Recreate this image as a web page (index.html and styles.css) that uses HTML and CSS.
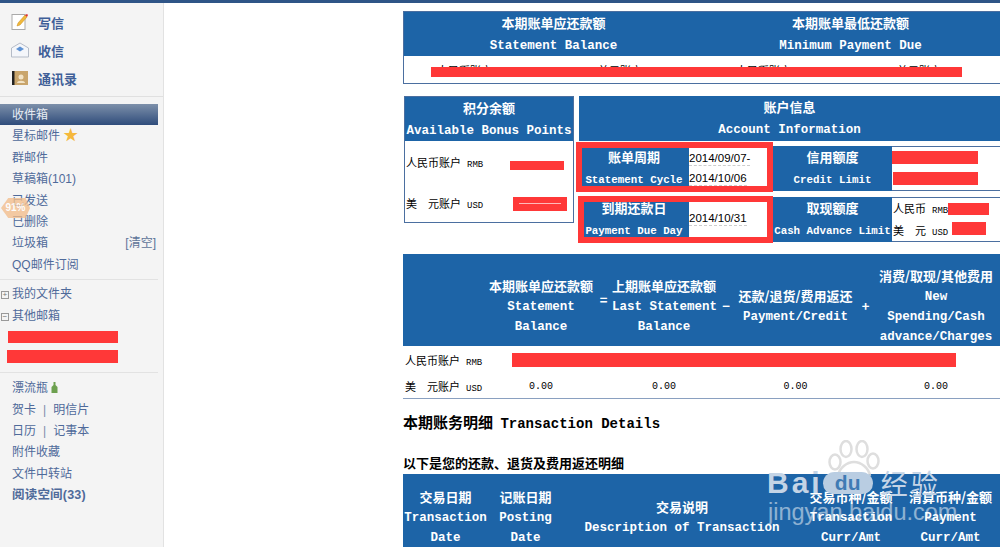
FILE: index.html
```html
<!DOCTYPE html>
<html lang="zh">
<head>
<meta charset="utf-8">
<title>邮箱</title>
<link rel="stylesheet" href="styles.css">
</head>
<body>
<div class="topbar"></div>
<div class="page">
  <aside class="side">
    <ul class="compose">
      <li><svg class="ic" viewBox="0 0 18 18"><rect x="1" y="1.500" width="13" height="15" fill="#fff" stroke="#aaa"/><path d="M6 13l1-3 7-8 2 2-7 8z" fill="#f0b93a" stroke="#c88a20" stroke-width=".5"/><path d="M14 2l2 2 1-2-1-1z" fill="#d33"/></svg>写信</li>
      <li><svg class="ic" viewBox="0 0 18 18"><path d="M.5 7L9 2l8.500 5v9H.5z" fill="#f4f6fa" stroke="#b5bcc8"/><path d="M5 8l4-2.500L13 8l-4 2.500z" fill="#5f93d4"/></svg>收信</li>
      <li><svg class="ic" viewBox="0 0 18 18"><rect x="1" y="2" width="16" height="14" fill="#c9a56c"/><rect x="1" y="2" width="2.500" height="14" fill="#222"/><circle cx="10" cy="8" r="2.500" fill="#f2e3c6"/><path d="M6 14c0-3 8-3 8 0z" fill="#f2e3c6"/></svg>通讯录</li>
    </ul>
    <ul class="menu first">
      <li class="active">收件箱</li>
      <li>星标邮件 <span class="star">★</span></li>
      <li>群邮件</li>
      <li>草稿箱(101)</li>
      <li>已发送</li>
      <li>已删除</li>
      <li class="spread">垃圾箱<span class="clear">[清空]</span></li>
      <li>QQ邮件订阅</li>
    </ul>
    <ul class="menu second">
      <li><span class="toggle">+</span>我的文件夹</li>
      <li><span class="toggle">−</span>其他邮箱</li>
      <li class="mask-row"><span class="mask-side"></span></li>
      <li class="mask-row"><span class="mask-side"></span></li>
    </ul>
    <ul class="menu third">
      <li>漂流瓶 <svg class="bottle" viewBox="0 0 7 11"><path d="M2.500 0h2v3l2 2v6H.5V5l2-2z" fill="#6da04f"/></svg></li>
      <li>贺卡<span class="sep">|</span>明信片</li>
      <li>日历<span class="sep">|</span>记事本</li>
      <li>附件收藏</li>
      <li>文件中转站</li>
      <li class="strong">阅读空间(33)</li>
    </ul>
    <div class="badge">91%</div>
  </aside>

  <main class="main">
    <table class="tbl summary">
      <tr class="head"><th>本期账单应还款额<span class="en">Statement Balance</span></th><th class="shift">本期账单最低还款额<span class="en">Minimum Payment Due</span></th></tr>
      <tr class="values"><td>人民币账户 <span class="usd">美元账户</span></td><td>人民币账户 <span class="usd">美元账户</span></td></tr>
    </table>
    <div class="mask m-summary"></div>

    <div class="info-row">
      <section class="points">
        <h3 class="panel-head">积分余额<span class="en">Available Bonus Points</span></h3>
        <div class="acct-list">
          <div class="acct">人民币账户 <span class="cur">RMB</span></div>
          <div class="acct">美　元账户 <span class="cur">USD</span></div>
        </div>
      </section>
      <section class="account">
        <h3 class="panel-head">账户信息<span class="en">Account Information</span></h3>
        <div class="account-grid">
          <div class="label">账单周期<span class="en sm">Statement Cycle</span></div>
          <div class="date"><span>2014/09/07-</span><span>2014/10/06</span></div>
          <div class="label">信用额度<span class="en sm">Credit Limit</span></div>
          <div class="limit"></div>
          <div class="label">到期还款日<span class="en sm">Payment Due Day</span></div>
          <div class="date one"><span>2014/10/31</span></div>
          <div class="label">取现额度<span class="en sm">Cash Advance Limit</span></div>
          <div class="limit cash"><div>人民币 <span class="cur">RMB</span></div><div>美　元 <span class="cur">USD</span></div></div>
        </div>
      </section>
      <div class="mask m-p1"></div><div class="mask m-p2"><i></i></div>
      <div class="mask m-c1"></div><div class="mask m-c2"></div>
      <div class="mask m-c3"></div><div class="mask m-c4"></div>
      <div class="frame f1"></div><div class="frame f2"></div>
    </div>

    <table class="tbl balance">
      <colgroup><col class="b0"><col class="b1"><col class="b2"><col class="b3"><col class="b4"><col class="b5"><col class="b6"><col class="b7"></colgroup>
      <tr class="head">
        <th></th>
        <th>本期账单应还款额<span class="en">Statement<br>Balance</span></th>
        <th class="op eq">=</th>
        <th>上期账单应还款额<span class="en">Last Statement<br>Balance</span></th>
        <th class="op">−</th>
        <th>还款/退货/费用返还<span class="en">Payment/Credit</span></th>
        <th class="op">+</th>
        <th class="last">消费/取现/其他费用<span class="en">New<br>Spending/Cash<br>advance/Charges</span></th>
      </tr>
      <tr class="amount rmb"><td class="name">人民币账户 <span class="cur">RMB</span></td><td></td><td></td><td></td><td></td><td></td><td></td><td></td></tr>
      <tr class="amount usd-row"><td class="name">美　元账户 <span class="cur">USD</span></td><td>0.00</td><td></td><td>0.00</td><td></td><td>0.00</td><td></td><td class="last">0.00</td></tr>
    </table>
    <div class="mask m-balance"></div>

    <h2 class="title">本期账务明细 <span class="en-title">Transaction Details</span></h2>
    <h4 class="subtitle">以下是您的还款、退货及费用返还明细</h4>

    <table class="tbl detail">
      <colgroup><col class="d0"><col class="d1"><col class="d2"><col class="d3"><col class="d4"></colgroup>
      <tr class="head">
        <th>交易日期<span class="en">Transaction<br>Date</span></th>
        <th>记账日期<span class="en">Posting<br>Date</span></th>
        <th>交易说明<span class="en">Description of Transaction</span></th>
        <th>交易币种/金额<span class="en">Transaction<br>Curr/Amt</span></th>
        <th class="shift">清算币种/金额<span class="en">Payment<br>Curr/Amt</span></th>
      </tr>
    </table>
  </main>
</div>

<div class="watermark">
  <svg class="paw" viewBox="0 0 54 36"><g fill="#fff" stroke="#d9d9d9" stroke-width="2.500"><ellipse cx="8" cy="22" rx="5.500" ry="7.500"/><ellipse cx="19" cy="9" rx="5.500" ry="8"/><ellipse cx="35" cy="9" rx="5.500" ry="8"/><ellipse cx="46" cy="21" rx="5.500" ry="7.500"/><path d="M11 36c1-8 9-14 16-14s15 6 16 14"/></g></svg>
  <div class="wm-line"><span class="wm-brand">Bai</span><span class="wm-du">du</span><span class="wm-cn">经验</span></div>
  <div class="wm-url">jingyan.baidu.com</div>
</div>
</body>
</html>
```
FILE: styles.css
```css
* { box-sizing: border-box; }
html, body { margin: 0; padding: 0; height: 547px; overflow: hidden; background: #fff; }
body { font-family: "Liberation Sans", "Noto Sans CJK SC", sans-serif; font-size: 12px; color: #000; position: relative; }
ul { list-style: none; margin: 0; padding: 0; }
.topbar { height: 3px; background: #2f5587; }
.page { display: flex; height: 544px; }

.side { width: 164px; flex: none; background: #f4f4f4; border-right: 1px solid #e2e2e2; position: relative; color: #4f6a9a; }
.compose { height: 94px; padding-top: 5px; border-bottom: 1px solid #e0e0e0; }
.compose li { height: 28px; display: flex; align-items: center; gap: 9px; padding-left: 11px; font-size: 13px; font-weight: 700; color: #3f5f98; }
.ic { width: 18px; height: 18px; flex: none; }
.menu li { height: 21.4px; line-height: 23px; padding-left: 12px; width: 158px; white-space: nowrap; }
.menu.first { margin-top: 7px; padding-bottom: 4px; border-bottom: 1px solid #e2e2e2; width: 158px; }
.menu .active { background: linear-gradient(#7d90aa, #2f4c7b); color: #e8edf4; }
.star { color: #f5b83c; font-size: 15px; line-height: 15px; }
.spread { display: flex; justify-content: space-between; padding-right: 2px; }
.clear { color: #5d7398; }
.menu.second { padding-top: 3px; width: 158px; height: 93px; border-bottom: 1px solid #e2e2e2; }
.toggle { display: inline-block; width: 8px; height: 8px; border: 1px solid #999; color: #777; font-size: 8px; line-height: 6px; text-align: center; margin-left: -11px; margin-right: 3px; vertical-align: 1px; font-family: "Liberation Mono", monospace; }
.mask-row { position: relative; }
.mask-side { position: absolute; left: 8px; top: 5px; width: 110px; height: 12px; background: #ff3838; }
.menu.second .mask-row:last-child .mask-side { left: 7px; top: 3px; width: 111px; height: 13px; }
.menu.third { padding-top: 4px; }
.bottle { width: 7px; height: 11px; vertical-align: -1px; }
.sep { margin: 0 7px; color: #7a8caa; }
.strong { font-weight: 700; font-size: 12.500px; letter-spacing: .2px; }
.badge { position: absolute; left: 1px; top: 195px; width: 29px; height: 20px; background: #f3bd8b; opacity: .78; color: #fff; font-size: 10px; font-weight: 700; line-height: 20px; text-align: center; clip-path: polygon(0 50%, 25% 0, 85% 0, 100% 50%, 85% 100%, 25% 100%); }

.main { flex: 1; min-width: 0; padding: 8px 0 0 239px; position: relative; overflow: hidden; }
.tbl { border-collapse: collapse; table-layout: fixed; width: 600px; }
.tbl th, .tbl td { padding: 0; }
.head th { background: #1d64a7; color: #fff; font-size: 13px; font-weight: 700; line-height: 20px; text-align: center; vertical-align: middle; font-family: "Noto Sans CJK SC", sans-serif; white-space: nowrap; }
.en { display: block; font-family: "Liberation Mono", monospace; font-size: 12.500px; font-weight: 700; line-height: 20px; white-space: nowrap; position: relative; top: 1px; }
.en.sm { font-size: 10.800px; line-height: 22px; }
.summary { height: 73px; border: 1px solid #4b6fa0; }
.summary .head th { height: 44px; line-height: 22px; }
.summary .head .en { line-height: 22px; }
.summary .head .shift { padding-right: 4px; }
.summary .values td { font-size: 11px; line-height: 13px; padding: 9px 0 0 33px; vertical-align: top; white-space: nowrap; }
.usd { margin-left: 103px; }

.mask { position: absolute; background: #ff3838; }
.m-summary { left: 267px; top: 64px; width: 531px; height: 10px; }

.info-row { display: flex; gap: 5px; position: relative; height: 147px; margin: 12px 0 0 1px; }
.points { width: 170px; height: 127px; border: 1px solid #4b6fa0; flex: none; }
.panel-head { margin: 0; height: 45px; background: #1d64a7; color: #fff; font-size: 13px; line-height: 22px; text-align: center; font-family: "Noto Sans CJK SC", sans-serif; }
.panel-head .en { line-height: 22px; }
.points .panel-head { height: 44px; }
.acct-list { padding-top: 2px; }
.acct { height: 41px; line-height: 41px; padding-left: 1px; font-size: 11px; white-space: nowrap; }
.cur { font-family: "Liberation Mono", monospace; font-size: 9px; margin-left: 3px; }
.account { width: 421px; flex: none; }
.account-grid { display: grid; grid-template-columns: 110px 84px 119px 108px; grid-template-rows: 45px 45px; row-gap: 6px; margin-top: 5px; }
.label { background: #1d64a7; color: #fff; font-size: 13px; font-weight: 700; line-height: 22px; text-align: center; font-family: "Noto Sans CJK SC", sans-serif; white-space: nowrap; overflow: hidden; }
.date { display: flex; flex-direction: column; gap: 5px; padding-top: 5px; font-size: 11.500px; line-height: 14px; }
.date.one { padding-top: 14px; }
.date span { width: max-content; border-bottom: 1px dashed #ccc; }
.limit { border-top: 1px solid #4b6fa0; border-bottom: 1px solid #4b6fa0; font-size: 11px; padding: 1px 0 0 1px; line-height: 20px; white-space: nowrap; }
.m-p1 { left: 106px; top: 65px; width: 54px; height: 9px; }
.m-p2 { left: 109px; top: 101px; width: 54px; height: 14px; }
.m-p2 i { display: block; margin: 6px 6px 0; height: 1px; background: #ffb9b9; }
.m-c1 { left: 488px; top: 55px; width: 86px; height: 13px; }
.m-c2 { left: 489px; top: 76px; width: 85px; height: 13px; }
.m-c3 { left: 544px; top: 107px; width: 41px; height: 12px; }
.m-c4 { left: 548px; top: 126px; width: 34px; height: 13px; }
.frame { position: absolute; border: 6px solid #ff3838; }
.f1 { left: 172px; top: 46px; width: 197px; height: 50px; }
.f2 { left: 174px; top: 100px; width: 195px; height: 47px; }

.balance { margin-top: 11px; border-bottom: 1px solid #8aa0c0; }
.balance .head th { height: 92px; padding-top: 12px; }
.balance .head .eq { padding-top: 0; }
.b0 { width: 84px; } .b1 { width: 108px; } .b2 { width: 17px; } .b3 { width: 104px; } .b4 { width: 20px; } .b5 { width: 119px; } .b6 { width: 21px; } .b7 { width: 127px; }
.balance .last { padding-right: 7px; }
.op { font-family: "Liberation Mono", monospace; }
.amount td { text-align: center; font-size: 10px; font-family: "Liberation Mono", monospace; }
.rmb td { height: 31px; padding-bottom: 3px; }
.usd-row td { height: 21px; padding-bottom: 2px; }
.amount .name { text-align: left; padding-left: 2px; font-family: "Liberation Sans", "Noto Sans CJK SC", sans-serif; font-size: 11px; white-space: nowrap; }
.m-balance { left: 348px; top: 350px; width: 444px; height: 14px; }

.title { margin: 12px 0 0; height: 22px; line-height: 22px; font-size: 15px; font-weight: 700; font-family: "Noto Sans CJK SC", sans-serif; white-space: nowrap; }
.en-title { font-family: "Liberation Mono", monospace; font-size: 14px; margin-left: 4px; }
.subtitle { margin: 19px 0 0; height: 22px; line-height: 22px; font-size: 13px; font-weight: 700; font-family: "Noto Sans CJK SC", sans-serif; }
.detail .head th { height: 73px; line-height: 19.500px; vertical-align: top; padding-top: 13px; }
.detail .en { line-height: 19.500px; top: 3px; }
.detail .head th:nth-child(3) { padding-top: 23px; }
.detail .shift { padding-right: 3px; }
.d0 { width: 85px; } .d1 { width: 75px; } .d2 { width: 238px; } .d3 { width: 100px; } .d4 { width: 102px; }

.watermark { position: absolute; left: 765px; top: 440px; width: 185px; height: 90px; pointer-events: none; }
.paw { position: absolute; left: 62px; top: 0; width: 54px; height: 36px; opacity: .85; }
.wm-line { position: absolute; left: 2px; top: 31px; display: flex; align-items: center; height: 24px; color: #c4d4e6; }
.wm-brand { font-family: "Liberation Sans", sans-serif; font-size: 30px; font-weight: 700; line-height: 24px; letter-spacing: 3px; }
.wm-du { font-family: "Liberation Sans", sans-serif; font-size: 21px; font-weight: 700; line-height: 22px; height: 22px; width: 50px; text-align: center; background: #b9cde2; color: #3f7bb4; border-radius: 12px 12px 11px 11px; }
.wm-cn { font-family: "Noto Sans CJK SC", sans-serif; font-size: 27px; line-height: 24px; margin-left: 8px; letter-spacing: 3px; }
.wm-url { position: absolute; left: 3px; top: 60px; font-family: "Liberation Sans", sans-serif; font-size: 23.500px; line-height: 24px; color: #fff; opacity: .5; white-space: nowrap; }
```
